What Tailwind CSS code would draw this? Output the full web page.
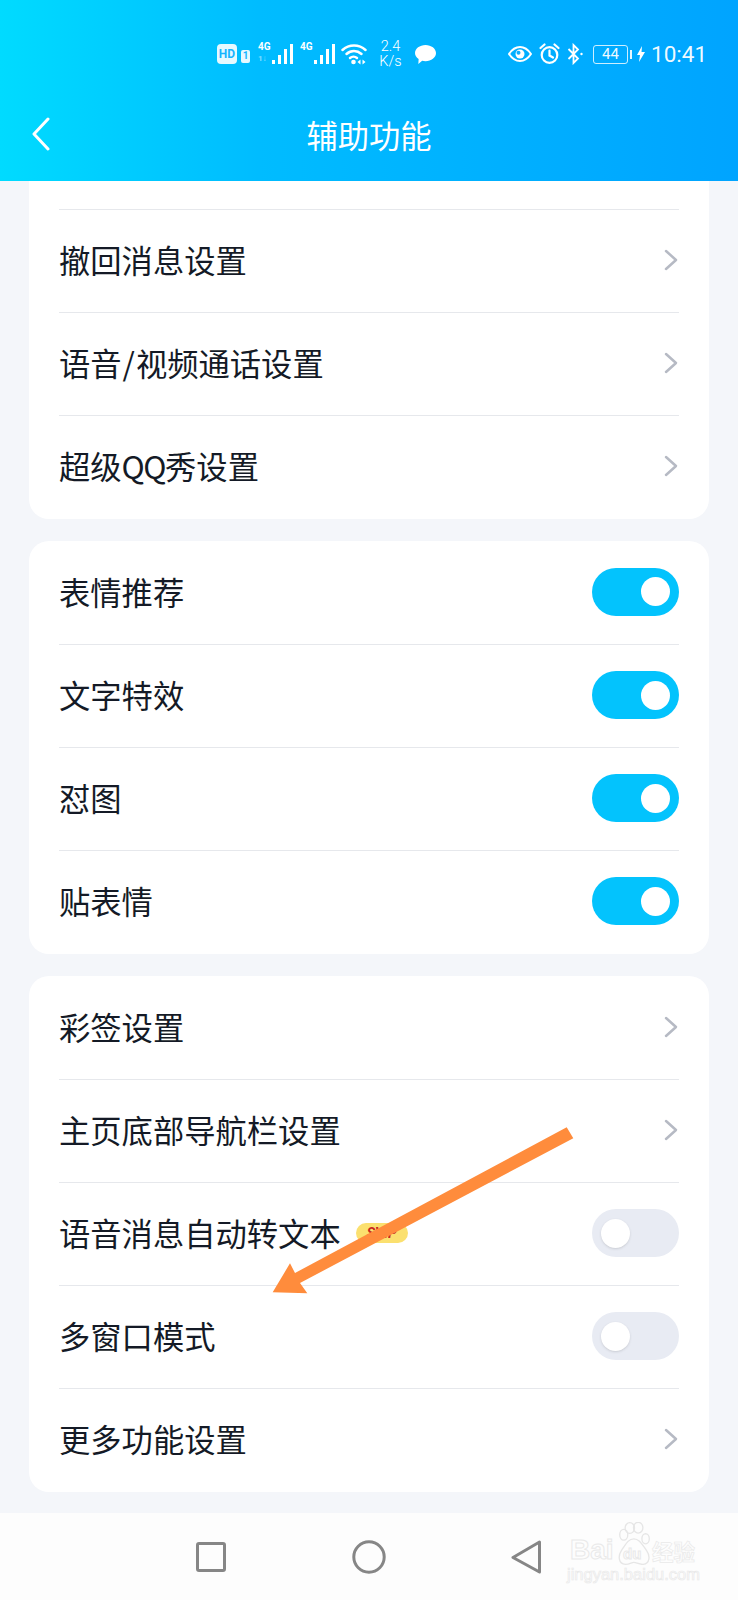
<!doctype html>
<html lang="zh-CN">
<head>
<meta charset="utf-8">
<script src="https://cdn.jsdelivr.net/npm/@tailwindcss/browser@4"></script>
</head>
<body class="m-0">
<div class="relative w-[738px] h-[1600px] overflow-hidden flex flex-col bg-[#f4f6fa] font-['Noto_Sans_CJK_SC','Noto_Sans',sans-serif] text-[#141a26]">

  <header class="h-[181px] shrink-0 flex flex-col text-white bg-linear-to-r from-[#00dbff] via-[#00bcff] via-35% to-[#00a4ff]">
    <div class="h-[88px] pt-[20px] pl-[217px] flex items-center font-['Roboto',sans-serif]">
      <div class="w-[20px] h-[20px] shrink-0 rounded-[4px] bg-white/90 flex items-center justify-center text-[#16b4ff] text-[12px] font-bold leading-none">HD</div>
      <div class="ml-[4px] w-[9px] h-[13px] shrink-0 mt-[4px] rounded-[2px] bg-white/90 flex items-center justify-center text-[#16b4ff] text-[10px] font-bold leading-none">1</div>
      <div class="ml-[8px] relative w-[35px] h-[22px] shrink-0">
        <span class="absolute left-0 top-[-1px] text-[10px] font-bold leading-[10px]">4G</span>
        <span class="absolute left-0 top-[12px] text-[8px] font-bold leading-[8px] text-white/50">1↓</span>
        <svg class="absolute inset-0" width="35" height="22" viewBox="0 0 35 22" fill="#fff"><rect x="14" y="17" width="3" height="4"/><rect x="20" y="12" width="3" height="9"/><rect x="26" y="6" width="3" height="15"/><rect x="32" y="1" width="3" height="20"/></svg>
      </div>
      <div class="ml-[7px] relative w-[35px] h-[22px] shrink-0">
        <span class="absolute left-0 top-[-1px] text-[10px] font-bold leading-[10px]">4G</span>
        <svg class="absolute inset-0" width="35" height="22" viewBox="0 0 35 22" fill="#fff"><rect x="14" y="17" width="3" height="4"/><rect x="20" y="12" width="3" height="9"/><rect x="26" y="6" width="3" height="15"/><rect x="32" y="1" width="3" height="20"/></svg>
      </div>
      <svg class="ml-[6px] shrink-0" width="27" height="22" viewBox="0 0 27 22" fill="none" stroke="#fff" stroke-width="2.500" stroke-linecap="round"><path d="M1.500 7C8 1 18 1 24.500 7"/><path d="M5.500 11C10 7 16 7 20.500 11"/><path d="M9 15C11 13.300 14 13.300 16 15"/><circle cx="12.500" cy="19" r="2.300" fill="#fff" stroke="none"/><path d="M19.500 16.500v5l-3-2.500zM21.500 16.500v5l3-2.500z" fill="#fff" stroke="none"/></svg>
      <div class="ml-[10px] w-[25px] shrink-0 flex flex-col items-center text-[14.5px] leading-[15px] font-light text-white"><span>2.4</span><span>K/s</span></div>
      <svg class="ml-[11px] shrink-0" width="23" height="21" viewBox="0 0 23 22" fill="#fff"><path d="M11.500 1C17.500 1 22.500 4.800 22.500 9.500S17.500 18 11.500 18c-1.200 0-2.400-.2-3.500-.5L4 21l.3-5.200C1.900 14.300.5 12 .5 9.500.5 4.800 5.500 1 11.500 1z"/></svg>

      <svg class="ml-[71px] shrink-0" width="24" height="16" viewBox="0 0 24 16" fill="none" stroke="#fff" stroke-width="2"><path d="M1 8C4 3.500 8 1 12 1s8 2.500 11 7c-3 4.500-7 7-11 7S4 12.500 1 8z"/><circle cx="12" cy="8" r="4.500" fill="#fff" stroke="none"/><circle cx="10.500" cy="6.800" r="2" fill="#10aeff" stroke="none"/></svg>
      <svg class="ml-[7px] shrink-0 -mt-[1px]" width="21" height="21" viewBox="0 0 21 21" fill="none" stroke="#fff" stroke-width="2.200" stroke-linecap="round"><circle cx="10.500" cy="12" r="7.800"/><path d="M10.500 7.500V12.500L14 14.500"/><path d="M1.500 5L5.500 1.500M19.500 5L15.500 1.500"/></svg>
      <svg class="ml-[7px] shrink-0" width="17" height="22" viewBox="0 0 17 22" fill="none" stroke="#fff" stroke-width="1.800"><path d="M1.500 6L11 15.500 6.500 20V2L11 6.500 1.500 16"/><circle cx="14.500" cy="11" r="1.200" fill="#fff" stroke="none"/></svg>
      <div class="ml-[9px] w-[35px] h-[19px] shrink-0 rounded-[3px] border-[1.5px] border-white/80 flex items-center justify-center text-[15px] leading-none text-white/95">44</div>
      <div class="ml-[2px] w-[2px] h-[9px] shrink-0 bg-white/90"></div>
      <svg class="ml-[5px] shrink-0" width="8" height="16" viewBox="0 0 8 16" fill="#fff"><path d="M5 0L0 9h3l-1 7 6-10H4.500z"/></svg>
      <span class="ml-[6px] text-[22.5px] leading-none text-white/95">10:41</span>
    </div>
    <div class="relative h-[93px] flex items-center justify-center">
      <svg class="absolute left-[31px] top-[29px]" width="20" height="34" viewBox="0 0 20 34" fill="none" stroke="#fff" stroke-width="3" stroke-linecap="round" stroke-linejoin="round"><path d="M17 2L3 17l14 15"/></svg>
      <h1 class="text-[31.3px] font-normal leading-none">辅助功能</h1>
    </div>
  </header>

  <main class="flex-1 flex flex-col gap-[22px] px-[29px]">
    <section class="bg-white rounded-b-[20px] px-[30px] pt-[28px] pb-[1px]">
      <div class="h-[103px] pb-[1px] border-t border-[#e6e8ec] flex items-center justify-between text-[31.3px]"><span>撤回消息设置</span><svg class="mr-[1px] mb-[1px]" width="14" height="22" viewBox="0 0 14 22" fill="none" stroke="#b6bac4" stroke-width="2.500" stroke-linecap="round" stroke-linejoin="round"><path d="M2 2l10 9-10 9"/></svg></div>
      <div class="h-[103px] pb-[1px] border-t border-[#e6e8ec] flex items-center justify-between text-[31.3px]"><span>语音<span class="px-[1px]">/</span>视频通话设置</span><svg class="mr-[1px] mb-[1px]" width="14" height="22" viewBox="0 0 14 22" fill="none" stroke="#b6bac4" stroke-width="2.500" stroke-linecap="round" stroke-linejoin="round"><path d="M2 2l10 9-10 9"/></svg></div>
      <div class="h-[103px] pb-[1px] border-t border-[#e6e8ec] flex items-center justify-between text-[31.3px]"><span>超级<span class="tracking-[-1.500px]">QQ</span>秀设置</span><svg class="mr-[1px] mb-[1px]" width="14" height="22" viewBox="0 0 14 22" fill="none" stroke="#b6bac4" stroke-width="2.500" stroke-linecap="round" stroke-linejoin="round"><path d="M2 2l10 9-10 9"/></svg></div>
    </section>

    <section class="bg-white rounded-[20px] px-[30px] pb-[1px]">
      <div class="h-[103px] pb-[1px] flex items-center justify-between text-[31.3px]"><span>表情推荐</span><div class="mb-[1px] w-[87px] h-[48px] rounded-full bg-[#03c3fd] flex items-center justify-end pr-[9px]"><div class="w-[29px] h-[29px] rounded-full bg-white"></div></div></div>
      <div class="h-[103px] pb-[1px] border-t border-[#e6e8ec] flex items-center justify-between text-[31.3px]"><span>文字特效</span><div class="mb-[1px] w-[87px] h-[48px] rounded-full bg-[#03c3fd] flex items-center justify-end pr-[9px]"><div class="w-[29px] h-[29px] rounded-full bg-white"></div></div></div>
      <div class="h-[103px] pb-[1px] border-t border-[#e6e8ec] flex items-center justify-between text-[31.3px]"><span>怼图</span><div class="mb-[1px] w-[87px] h-[48px] rounded-full bg-[#03c3fd] flex items-center justify-end pr-[9px]"><div class="w-[29px] h-[29px] rounded-full bg-white"></div></div></div>
      <div class="h-[103px] pb-[1px] border-t border-[#e6e8ec] flex items-center justify-between text-[31.3px]"><span>贴表情</span><div class="mb-[1px] w-[87px] h-[48px] rounded-full bg-[#03c3fd] flex items-center justify-end pr-[9px]"><div class="w-[29px] h-[29px] rounded-full bg-white"></div></div></div>
    </section>

    <section class="bg-white rounded-[20px] px-[30px] pb-[1px]">
      <div class="h-[103px] pb-[1px] flex items-center justify-between text-[31.3px]"><span>彩签设置</span><svg class="mr-[1px] mb-[1px]" width="14" height="22" viewBox="0 0 14 22" fill="none" stroke="#b6bac4" stroke-width="2.500" stroke-linecap="round" stroke-linejoin="round"><path d="M2 2l10 9-10 9"/></svg></div>
      <div class="h-[103px] pb-[1px] border-t border-[#e6e8ec] flex items-center justify-between text-[31.3px]"><span>主页底部导航栏设置</span><svg class="mr-[1px] mb-[1px]" width="14" height="22" viewBox="0 0 14 22" fill="none" stroke="#b6bac4" stroke-width="2.500" stroke-linecap="round" stroke-linejoin="round"><path d="M2 2l10 9-10 9"/></svg></div>
      <div class="h-[103px] pb-[1px] border-t border-[#e6e8ec] flex items-center justify-between text-[31.3px]">
        <div class="flex items-center"><span>语音消息自动转文本</span><span class="ml-[15px] -mt-[2px] w-[52px] h-[20px] rounded-full bg-[#fbe06f] flex items-center justify-center text-[#c8281e] text-[14px] font-bold italic leading-none font-['Roboto',sans-serif]">SVIP</span></div>
        <div class="mb-[1px] w-[87px] h-[48px] rounded-full bg-[#e8ebf3] flex items-center pl-[9px]"><div class="w-[29px] h-[29px] rounded-full bg-white shadow-sm"></div></div>
      </div>
      <div class="h-[103px] pb-[1px] border-t border-[#e6e8ec] flex items-center justify-between text-[31.3px]"><span>多窗口模式</span><div class="mb-[1px] w-[87px] h-[48px] rounded-full bg-[#e8ebf3] flex items-center pl-[9px]"><div class="w-[29px] h-[29px] rounded-full bg-white shadow-sm"></div></div></div>
      <div class="h-[103px] pb-[1px] border-t border-[#e6e8ec] flex items-center justify-between text-[31.3px]"><span>更多功能设置</span><svg class="mr-[1px] mb-[1px]" width="14" height="22" viewBox="0 0 14 22" fill="none" stroke="#b6bac4" stroke-width="2.500" stroke-linecap="round" stroke-linejoin="round"><path d="M2 2l10 9-10 9"/></svg></div>
    </section>
  </main>

  <nav class="relative h-[87px] shrink-0 bg-[#fdfdfd] pl-[196px] flex items-center">
    <svg class="mt-[1px]" width="30" height="30" viewBox="0 0 30 30" fill="none" stroke="#868686" stroke-width="3" stroke-linejoin="round"><rect x="1.500" y="1.500" width="27" height="27" rx="1.500"/></svg>
    <svg class="ml-[126px]" width="34" height="34" viewBox="0 0 34 34" fill="none" stroke="#868686" stroke-width="3"><circle cx="17" cy="17" r="15.200"/></svg>
    <svg class="ml-[125px]" width="31" height="34" viewBox="0 0 31 34" fill="none" stroke="#868686" stroke-width="3" stroke-linejoin="round"><path d="M28.500 2L2 17.500l26.500 14.500z"/></svg>
    <div class="absolute left-[567px] top-0 w-[134px] h-[87px] text-transparent [-webkit-text-stroke:1px_#e9e9e9] font-['Liberation_Sans',sans-serif]">
      <svg class="absolute left-[51px] top-[9px]" width="32" height="43" viewBox="0 0 95 128" fill="none" stroke="#e6e6e6" stroke-width="4"><ellipse cx="17" cy="38" rx="12" ry="16"/><ellipse cx="35" cy="18" rx="14" ry="16"/><ellipse cx="60" cy="17" rx="14" ry="16"/><ellipse cx="82" cy="50" rx="11" ry="15"/><path d="M47 50C30 50 22 68 10 85 0 100 0 125 22 126 35 126 40 120 47 120 55 120 62 127 75 126 95 124 96 100 85 85 72 68 64 50 47 50z"/></svg>
      <span class="absolute left-[3px] top-[23px] text-[28px] font-bold leading-none">Bai</span>
      <span class="absolute left-[56px] top-[33px] text-[15px] font-bold leading-none">du</span>
      <span class="absolute left-[85px] top-[27px] text-[21.5px] font-bold leading-none [-webkit-text-stroke:0.7px_#e9e9e9] font-['Noto_Sans_CJK_SC',sans-serif]">经验</span>
      <span class="absolute left-0 top-[53px] text-[16.500px] font-normal leading-none whitespace-nowrap [-webkit-text-stroke:0.7px_#e9e9e9]">jingyan.baidu.com</span>
    </div>
  </nav>

  <svg class="absolute left-0 top-0 pointer-events-none" width="738" height="1600" viewBox="0 0 738 1600" fill="#ff8c3c"><path d="M566.700 1127.300L573.300 1138.300 300 1283 307.300 1293.300 272.700 1292.300 290 1263.300 295 1273z"/></svg>
</div>
</body>
</html>
